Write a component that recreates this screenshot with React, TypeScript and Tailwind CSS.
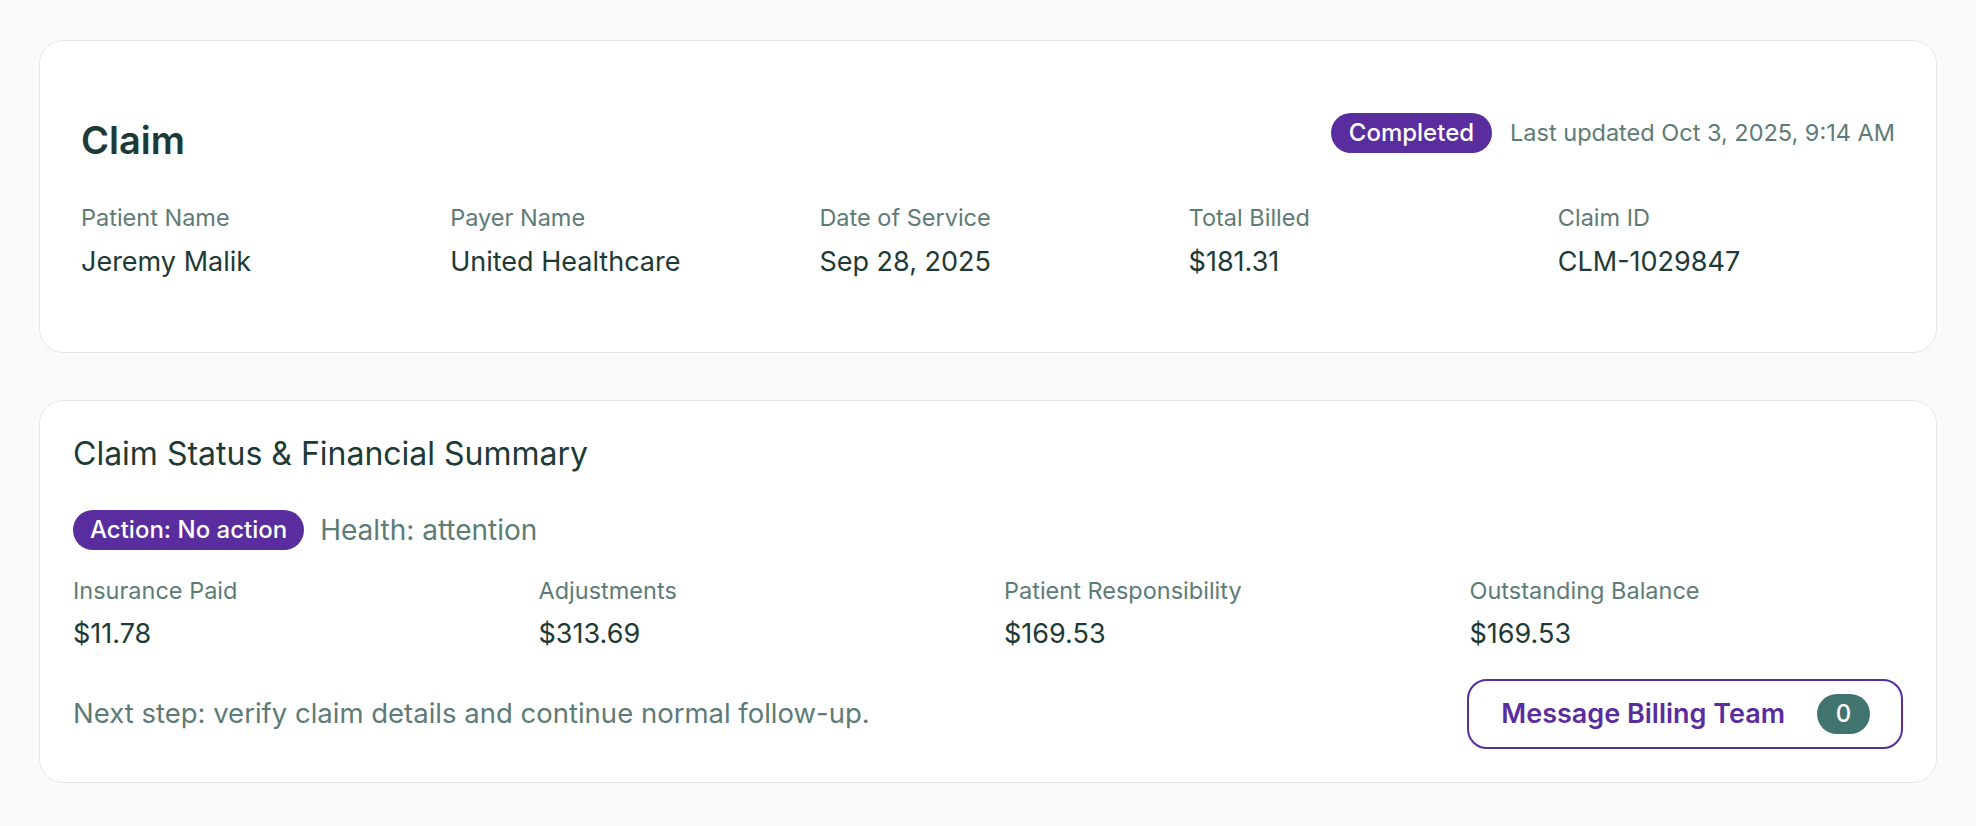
import React from 'react';

const claimFields = [
  { label: 'Patient Name', value: 'Jeremy Malik' },
  { label: 'Payer Name', value: 'United Healthcare' },
  { label: 'Date of Service', value: 'Sep 28, 2025' },
  { label: 'Total Billed', value: '$181.31' },
  { label: 'Claim ID', value: 'CLM-1029847' },
];

const financials = [
  { label: 'Insurance Paid', value: '$11.78' },
  { label: 'Adjustments', value: '$313.69' },
  { label: 'Patient Responsibility', value: '$169.53' },
  { label: 'Outstanding Balance', value: '$169.53' },
];

const Field: React.FC<{ label: string; value: string; gap: string }> = ({ label, value, gap }) => (
  <div className="flex flex-col">
    <span className="text-[23.5px] leading-[30px] text-[#5d7b77]">{label}</span>
    <span className={`text-[27px] leading-[36px] text-[#1d3a36] ${gap}`}>{value}</span>
  </div>
);

const App: React.FC = () => {
  return (
    <div
      className="min-h-screen bg-[#fafafa] px-[39px] pt-[40px] pb-[45px]"
      style={{ fontFamily: 'Inter, "Noto Sans", sans-serif' }}
    >
      <div className="flex flex-col gap-[47px]">
        {/* Claim header card */}
        <div className="rounded-[24px] border border-[#e3e8e7] bg-white px-[41px] pt-[72px] pb-[72px]">
          <div className="flex h-[48px] items-start justify-between">
            <h1 className="text-[38px] leading-[48px] font-semibold text-[#1d3a36] pt-[3px]">Claim</h1>
            <div className="flex items-center gap-[18px]">
              <span className="h-[40px] flex items-center rounded-full bg-[#5a2d9f] px-[18px] text-[24px] font-medium text-white">
                Completed
              </span>
              <span className="text-[23.5px] text-[#5d7b77]">Last updated Oct 3, 2025, 9:14 AM</span>
            </div>
          </div>
          <div className="mt-[42px] grid grid-cols-5 gap-8">
            {claimFields.map(f => (
              <Field key={f.label} label={f.label} value={f.value} gap="mt-[11px]" />
            ))}
          </div>
        </div>

        {/* Status & financial summary card */}
        <div className="rounded-[24px] border border-[#e3e8e7] bg-white px-[33px] pt-[33px] pb-[33px]">
          <h2 className="text-[32px] leading-[40px] font-normal text-[#1d3a36]">
            Claim Status &amp; Financial Summary
          </h2>
          <div className="mt-[36px] flex h-[40px] items-center gap-[16px]">
            <span className="h-[40px] flex items-center rounded-full bg-[#5a2d9f] px-[17px] text-[24px] font-medium text-white">
              Action: No action
            </span>
            <span className="text-[28px] text-[#5d7b77]">Health: attention</span>
          </div>
          <div className="mt-[26px] grid grid-cols-4 gap-8">
            {financials.map(f => (
              <Field key={f.label} label={f.label} value={f.value} gap="mt-[10px]" />
            ))}
          </div>
          <div className="mt-[27px] flex items-center justify-between">
            <p className="text-[27.5px] text-[#5d7b77]">
              Next step: verify claim details and continue normal follow-up.
            </p>
            <button className="h-[70px] flex items-center gap-8 rounded-[20px] border-2 border-[#5a2d9f] bg-white pl-[32px] pr-[31px]">
              <span className="text-[27px] font-semibold text-[#5a2d9f]">Message Billing Team</span>
              <span className="h-[40px] w-[53px] flex items-center justify-center rounded-full bg-[#41736f] text-[24px] font-medium text-white">
                0
              </span>
            </button>
          </div>
        </div>
      </div>
    </div>
  );
};

export default App;
